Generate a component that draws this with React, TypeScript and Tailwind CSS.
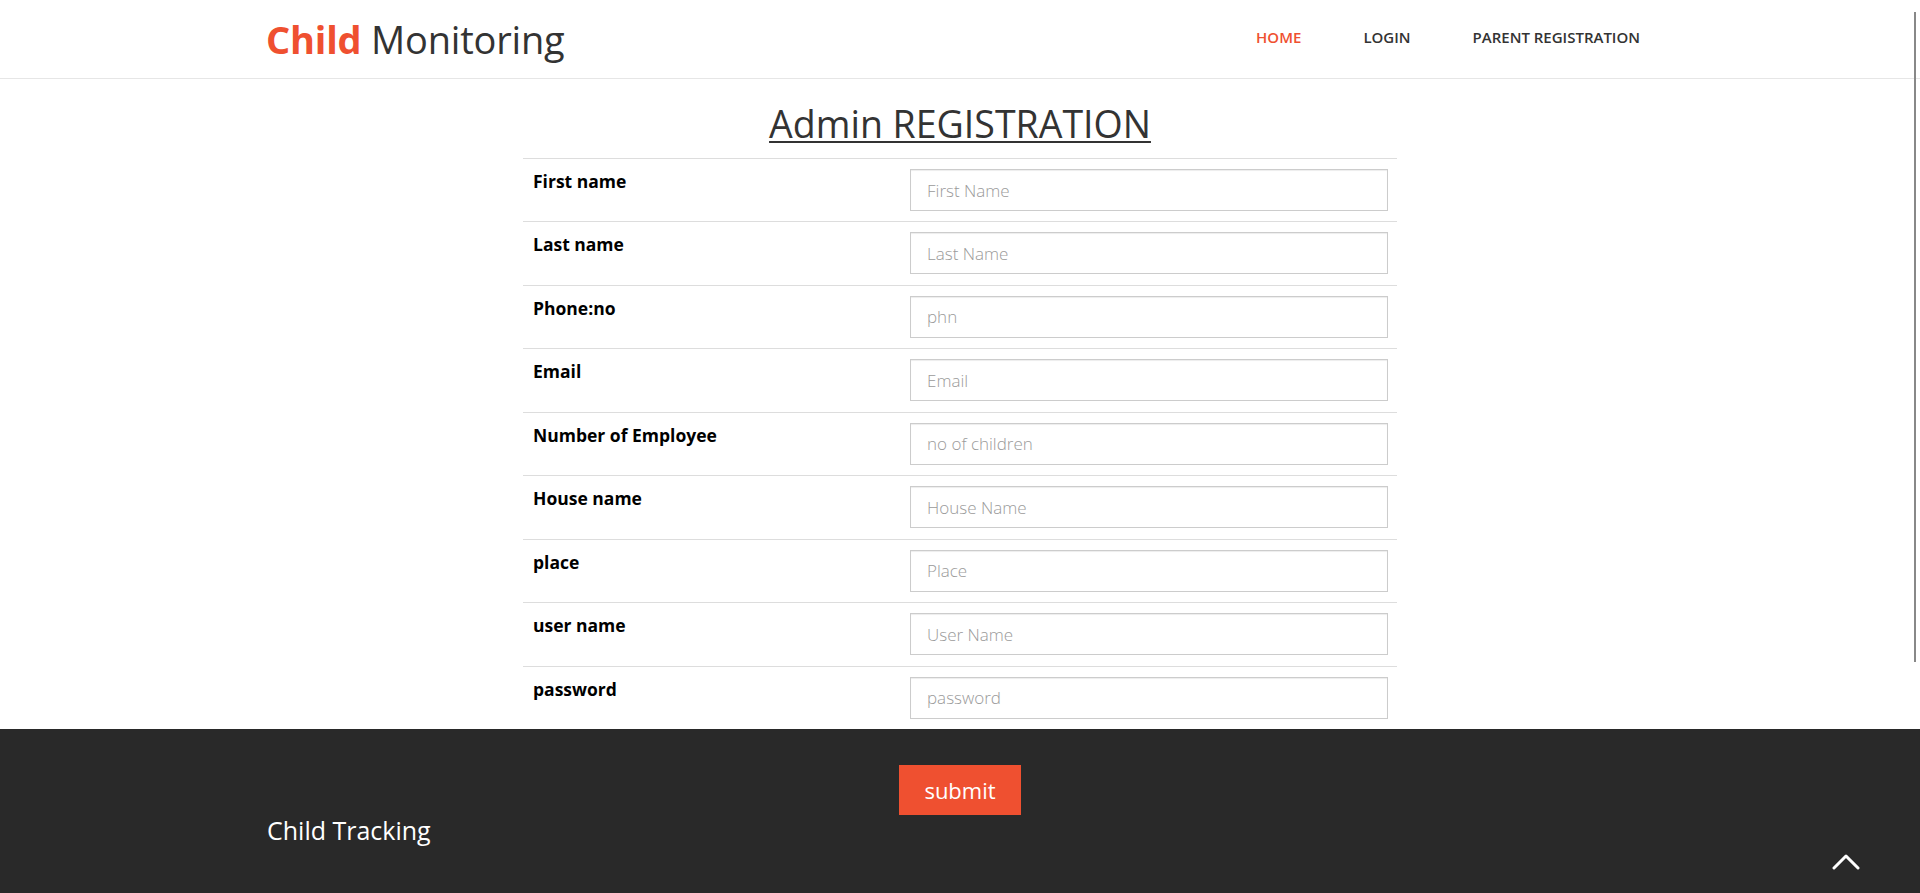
import React from 'react';

const fields = [
  { label: 'First name', placeholder: 'First Name' },
  { label: 'Last name', placeholder: 'Last Name' },
  { label: 'Phone:no', placeholder: 'phn' },
  { label: 'Email', placeholder: 'Email' },
  { label: 'Number of Employee', placeholder: 'no of children' },
  { label: 'House name', placeholder: 'House Name' },
  { label: 'place', placeholder: 'Place' },
  { label: 'user name', placeholder: 'User Name' },
  { label: 'password', placeholder: 'password' },
];

const App: React.FC = () => {
  return (
    <div className="h-[893px] overflow-hidden bg-white font-['Open_Sans',sans-serif] text-[#333]">
      {/* Header */}
      <header className="flex h-[79px] items-center justify-between border-b border-[#e6e6e6] pl-[266px] pr-[280px]">
        <a href="#" className="text-[38px] leading-none tracking-[-0.2px]">
          <span className="font-bold text-[#ef5030]">Child</span> <span className="text-[#333]">Monitoring</span>
        </a>
        <nav className="flex gap-[62px] pb-[4px] text-[15px] font-semibold uppercase">
          <a href="#" className="text-[#ef5030]">Home</a>
          <a href="#" className="text-[#333]">Login</a>
          <a href="#" className="text-[#333]">Parent Registration</a>
        </nav>
      </header>

      {/* Form */}
      <main className="pt-[24px]">
        <h1 className="text-center text-[37.5px] leading-[42px] text-[#333]">
          <span className="underline decoration-[2px] underline-offset-[3px]">Admin REGISTRATION</span>
        </h1>
        <div className="mx-auto mt-[13px] w-[874px]">
          {fields.map((f) => (
            <div key={f.label} className="grid h-[63.45px] grid-cols-[387px_1fr] border-t border-[#dddddd] pr-[9px]">
              <div className="pl-[10px] pt-[10px] text-[17.5px] font-bold leading-[24px] text-black">{f.label}</div>
              <div className="pt-[10px]">
                <input
                  type={f.label === 'password' ? 'password' : 'text'}
                  placeholder={f.placeholder}
                  className="h-[42px] w-full border border-[#cccccc] bg-white px-[16px] text-[17px] font-light text-[#555] shadow-[inset_0_1px_1px_rgba(0,0,0,0.075)] outline-none placeholder:text-[#9a9a9a]"
                />
              </div>
            </div>
          ))}
        </div>
      </main>

      {/* Footer */}
      <footer className="relative h-[164px] bg-[#292929] pt-[36px]">
        <button className="mx-auto block h-[50px] w-[122px] bg-[#ef5030] text-[22px] leading-none text-white">
          submit
        </button>
        <div className="-mt-[2px] pl-[267px] text-[25px] leading-[35px] text-white">Child Tracking</div>

        {/* Scroll to top */}
        <a href="#" className="absolute bottom-[23px] right-[60px] block">
          <svg width="28" height="17" viewBox="0 0 28 17" fill="none">
            <polyline points="2,15 14,3 26,15" stroke="white" strokeWidth="3" strokeLinecap="round" strokeLinejoin="round" />
          </svg>
        </a>
      </footer>

      {/* Custom scrollbar rail */}
      <div className="fixed right-[4px] top-[12px] h-[650px] w-[2px] bg-[#888888]" />
    </div>
  );
};

export default App;
